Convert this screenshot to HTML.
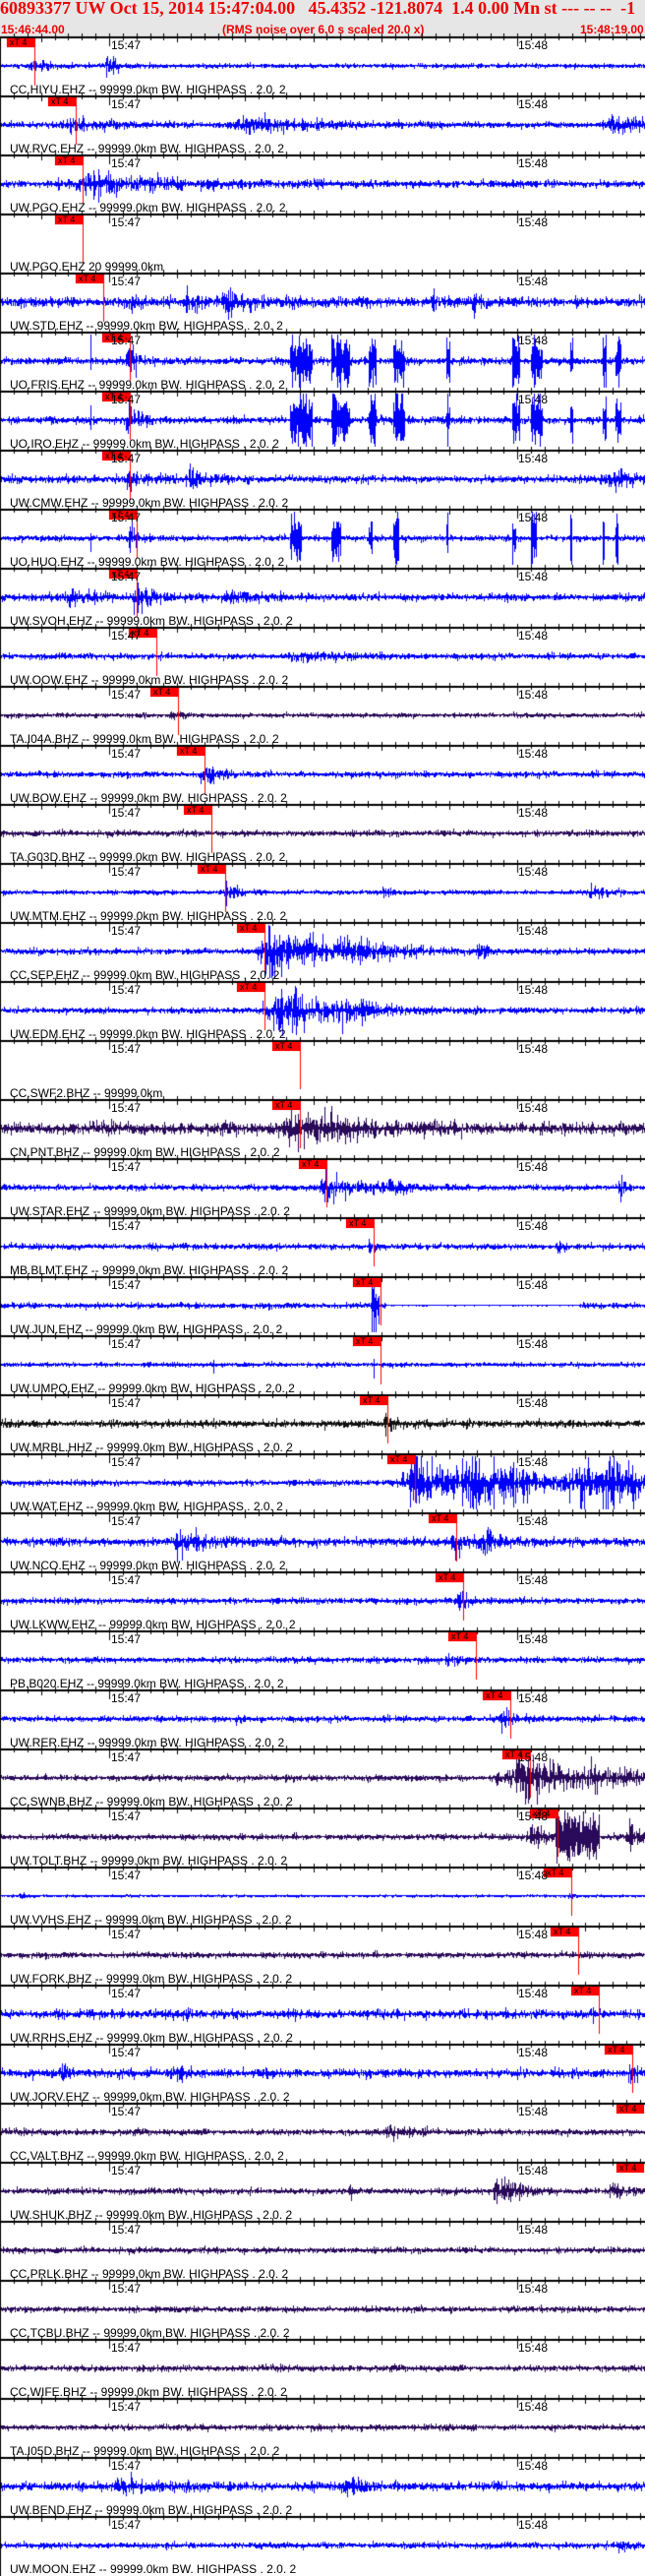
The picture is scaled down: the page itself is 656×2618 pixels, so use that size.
<!DOCTYPE html>
<html><head><meta charset="utf-8">
<style>
html,body{margin:0;padding:0;background:#fff;}
body{width:656px;height:2618px;position:relative;overflow:hidden;font-family:"Liberation Sans",Arial,sans-serif;}
#hdr{position:absolute;left:0;top:0;width:656px;height:37px;background:#e6e6e6;}
#t1{position:absolute;left:0px;top:-2px;font:bold 18px "Liberation Serif",serif;color:#ee0000;white-space:pre;}
.t2{position:absolute;top:23px;font:bold 12px "Liberation Sans",sans-serif;color:#ee0000;white-space:pre;}
canvas{position:absolute;left:0;top:0;}
.lab{position:absolute;left:10px;font-size:12px;line-height:12px;color:#000;white-space:pre;}
.tm{position:absolute;font-size:12px;line-height:12px;color:#000;}
.pk{position:absolute;width:28px;height:9px;background:#ff0000;font-size:9px;line-height:9px;color:#000;text-indent:3px;}
</style></head><body>
<div id="hdr"></div>
<div id="t1">60893377 UW Oct 15, 2014 15:47:04.00   45.4352 -121.8074  1.4 0.00 Mn st --- -- --  -1</div>
<div class="t2" style="left:1px">15:46:44.00</div>
<div class="t2" style="left:226px">(RMS noise over 6.0 s scaled 20.0 x)</div>
<div class="t2" style="left:590px">15:48:19.00</div>
<canvas id="c" width="656" height="2618"></canvas>
<div id="txt"></div>
<script>
var B="#0000ff",P="#2a0a5a",K="#111111";
var FB=[[295,23],[337,19],[375,8],[400,12],[454,4],[521,8],[540,12],[580,3],[613,4],[626,6]];
function bursts(sc){var o=[];for(var i=0;i<FB.length;i++)o.push([FB[i][0],40,Math.max(2,Math.round(FB[i][1]*sc)),1]);return o;}
var T=[
["CC.HIYU.EHZ -- 99999.0km BW. HIGHPASS . 2.0. 2",B,1.5,[[30,4,20],[108,10,10]],35],
["UW.RVC.EHZ -- 99999.0km BW. HIGHPASS . 2.0. 2",B,2,[[70,5,40],[250,6,80],[620,10,30]],77],
["UW.PGO.EHZ -- 99999.0km BW. HIGHPASS . 2.0. 2",B,2.5,[[85,8,90],[555,5,5]],84],
["UW.PGO.EHZ 20 99999.0km",null,0,[],84],
["UW.STD.EHZ -- 99999.0km BW. HIGHPASS . 2.0. 2",B,3.5,[[230,14,15],[130,8,10],[190,8,10],[290,7,10],[440,7,10],[480,6,10]],105],
["UO.FRIS.EHZ -- 99999.0km BW. HIGHPASS . 2.0. 2",B,2.5,[[130,18,8],[92,30,1,1]].concat(bursts(1)),132],
["UO.IRO.EHZ -- 99999.0km BW. HIGHPASS . 2.0. 2",B,2.5,[[130,18,8],[92,30,1,1]].concat(bursts(1)),132],
["UW.CMW.EHZ -- 99999.0km BW. HIGHPASS . 2.0. 2",B,2.5,[[192,10,15],[130,6,20],[620,6,40]],132],
["UO.HUO.EHZ -- 99999.0km BW. HIGHPASS . 2.0. 2",B,2,[[132,18,6],[92,20,1,1]].concat(bursts(0.5)),139],
["UW.SVOH.EHZ -- 99999.0km BW. HIGHPASS . 2.0. 2",B,2.5,[[137,12,15],[70,7,20],[230,6,30]],139],
["UW.OOW.EHZ -- 99999.0km BW. HIGHPASS . 2.0. 2",B,2,[[300,3,60]],159],
["TA.I04A.BHZ -- 99999.0km BW. HIGHPASS . 2.0. 2",P,1.5,[[175,6,8]],181],
["UW.BOW.EHZ -- 99999.0km BW. HIGHPASS . 2.0. 2",B,2,[[205,20,10]],208],
["TA.G03D.BHZ -- 99999.0km BW. HIGHPASS . 2.0. 2",P,2,[],215],
["UW.MTM.EHZ -- 99999.0km BW. HIGHPASS . 2.0. 2",B,1.5,[[230,6,15],[390,8,5],[600,5,20]],229],
["CC.SEP.EHZ -- 99999.0km BW. HIGHPASS . 2.0. 2",B,2,[[275,24,50],[350,10,40],[485,7,10]],269],
["UW.EDM.EHZ -- 99999.0km BW. HIGHPASS . 2.0. 2",B,2,[[280,24,45],[350,10,30]],269],
["CC.SWF2.BHZ -- 99999.0km",null,0,[],305],
["CN.PNT.BHZ -- 99999.0km BW. HIGHPASS . 2.0. 2",P,4,[[300,16,60]],305],
["UW.STAR.EHZ -- 99999.0km BW. HIGHPASS . 2.0. 2",B,2,[[330,14,30],[390,8,20],[630,10,5]],332],
["MB.BLMT.EHZ -- 99999.0km BW. HIGHPASS . 2.0. 2",B,2,[[375,12,5],[567,8,4]],380],
["UW.JUN.EHZ -- 99999.0km BW. HIGHPASS . 2.0. 2",B,2,[[378,40,8,1]],387],
["UW.UMPQ.EHZ -- 99999.0km BW. HIGHPASS . 2.0. 2",B,1.5,[[380,22,1,1],[217,16,1,1],[48,10,1,1]],387],
["UW.MRBL.HHZ -- 99999.0km BW. HIGHPASS . 2.0. 2",K,2.5,[[392,9,8]],394],
["UW.WAT.EHZ -- 99999.0km BW. HIGHPASS . 2.0. 2",B,2,[[420,25,60],[480,25,40],[590,25,60],[620,22,15]],422],
["UW.NCO.EHZ -- 99999.0km BW. HIGHPASS . 2.0. 2",B,3,[[180,10,30],[460,12,10],[490,12,15]],464],
["UW.LKWW.EHZ -- 99999.0km BW. HIGHPASS . 2.0. 2",B,2,[[466,9,10]],471],
["PB.B020.EHZ -- 99999.0km BW. HIGHPASS . 2.0. 2",B,2,[[455,5,10]],484],
["UW.RER.EHZ -- 99999.0km BW. HIGHPASS . 2.0. 2",B,2,[[510,7,15],[240,5,5]],519],
["CC.SWNB.BHZ -- 99999.0km BW. HIGHPASS . 2.0. 2",P,2,[[530,20,90]],539],
["UW.TOLT.BHZ -- 99999.0km BW. HIGHPASS . 2.0. 2",P,2,[[565,34,45,1],[540,10,20],[640,12,15]],567],
["UW.VVHS.EHZ -- 99999.0km BW. HIGHPASS . 2.0. 2",B,0.8,[[20,5,4],[578,4,4]],581],
["UW.FORK.BHZ -- 99999.0km BW. HIGHPASS . 2.0. 2",P,2,[],588],
["UW.RRHS.EHZ -- 99999.0km BW. HIGHPASS . 2.0. 2",B,3,[[603,24,1,1],[300,18,1,1],[433,14,1,1],[190,7,3]],609],
["UW.JORV.EHZ -- 99999.0km BW. HIGHPASS . 2.0. 2",B,3,[[62,12,4],[222,18,1,1],[180,8,10],[640,14,8]],643],
["CC.VALT.BHZ -- 99999.0km BW. HIGHPASS . 2.0. 2",P,2,[[395,5,30]],655],
["UW.SHUK.BHZ -- 99999.0km BW. HIGHPASS . 2.0. 2",P,2,[[505,14,20],[355,8,5],[620,10,10]],655],
["CC.PRLK.BHZ -- 99999.0km BW. HIGHPASS . 2.0. 2",P,2,[],0],
["CC.TCBU.BHZ -- 99999.0km BW. HIGHPASS . 2.0. 2",P,2,[],0],
["CC.WIFE.BHZ -- 99999.0km BW. HIGHPASS . 2.0. 2",P,2,[],0],
["TA.I05D.BHZ -- 99999.0km BW. HIGHPASS . 2.0. 2",P,2,[],0],
["UW.BEND.EHZ -- 99999.0km BW. HIGHPASS . 2.0. 2",B,3,[[350,8,20],[120,6,40]],0],
["UW.MOON.EHZ -- 99999.0km BW. HIGHPASS . 2.0. 2",B,2,[[630,5,10]],0]
];
var s=12345;function r(){s=(s*1103515245+12345)&0x7fffffff;return s/0x7fffffff;}
function g(){return (r()+r()+r()-1.5)*1.4;}
var c=document.getElementById("c").getContext("2d");
var h="";
c.fillStyle="#000";c.fillRect(0,37,1,2581);
for(var k=0;k<T.length;k++){
 var t=T[k],ay=37+60*k,cy=ay+30;
 if(t[1]){
  c.fillStyle=t[1];
  var fl=(k==21);
  for(var x=1;x<656;x++){
   var a=t[2]*(0.7+0.6*r()),blk=false;
   for(var e=0;e<t[3].length;e++){var ev=t[3][e];var d=x-ev[0];var w=ev[2];
     if(ev[3]){if(d>=0&&d<w){blk=true;a=Math.max(a,ev[1]*(0.3+0.7*r()));}continue;}
     if(d>-w*0.3){var f=d<0?Math.exp(d/(w*0.15)):Math.exp(-d/w);a+=ev[1]*f*(0.4+0.8*r());}}
   if(fl&&x>392&&x<590){a=0.3;}
   var t1,t2;
   if(blk){t1=a*(0.3+0.7*r());t2=a*(0.3+0.7*r());}else{t1=Math.abs(g())*a+0.5;t2=Math.abs(g())*a+0.5;}
   if(t1>27)t1=27;if(t2>27)t2=27;
   c.fillRect(x,Math.round(cy-t1),1,Math.max(1,Math.round(t1+t2)));
  }
 }
 c.fillStyle="#000";c.fillRect(0,ay,656,2);
 for(var i=0;i<=47;i++){var tx=Math.round(111+(i-8)*2*6.92);if(tx<1||tx>655)continue;
  var big=((i-8)%5==0);c.fillRect(tx,ay-3,1,big?9:7);}
 c.fillRect(111,ay,1,10);c.fillRect(526,ay,1,10);
 if(t[4]){var px=t[4];c.fillStyle="#ff0000";c.fillRect(px-28,ay+2,28,9);
  if(k<35)c.fillRect(px,ay+2,1,48);
  h+='<div class="pk" style="left:'+(px-28)+'px;top:'+(ay+2)+'px">xT 4</div>';}
 h+='<div class="tm" style="left:113px;top:'+(ay+3)+'px">15:47</div>';
 h+='<div class="tm" style="left:527px;top:'+(ay+3)+'px">15:48</div>';
 h+='<div class="lab" style="top:'+(ay+48)+'px">'+t[0]+'</div>';
}
document.getElementById("txt").innerHTML=h;
</script>
</body></html>
